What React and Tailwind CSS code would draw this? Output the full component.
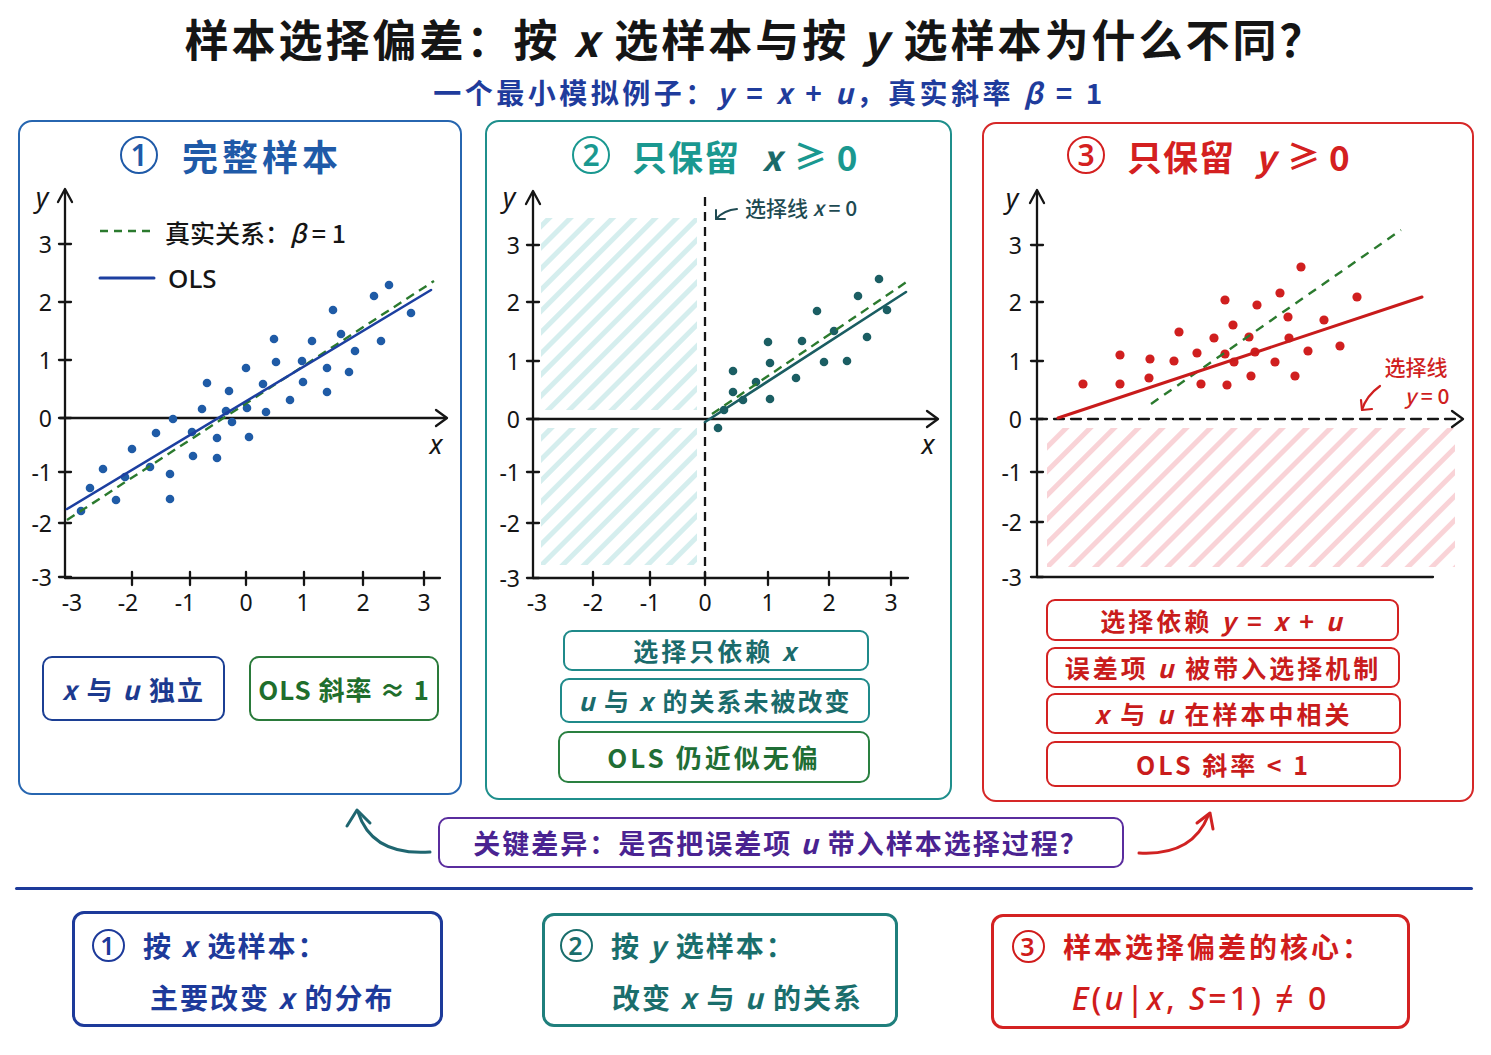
import React from "react";

const V = ({ children }) => <span className="italic">{children}</span>;

const Circ = ({ n, className }) => (
  <span
    className={`inline-flex items-center justify-center rounded-full border-current shrink-0 leading-none font-['Noto_Sans',sans-serif] ${className}`}
  >
    {n}
  </span>
);

function Axes({ ax, top, bottom, ticksY, labelX, zeroY, xStart, xEnd, dashed, bottomEnd, tickMarks, xLabels, yLab, xLab }) {
  return (
    <g stroke="#151515" strokeWidth="2.3" fill="none" strokeLinecap="round" strokeLinejoin="round">
      <line x1={ax} y1={bottom} x2={ax} y2={top + 2} />
      <polyline points={`${ax - 7},${top + 13} ${ax},${top} ${ax + 7},${top + 13}`} />
      {ticksY.map(([y]) => (
        <line key={y} x1={ax - 6} y1={y} x2={ax + 6} y2={y} />
      ))}
      <line x1={xStart} y1={zeroY} x2={xEnd - 1} y2={zeroY} strokeDasharray={dashed ? "10 7" : undefined} />
      <polyline points={`${xEnd - 11},${zeroY - 8} ${xEnd},${zeroY} ${xEnd - 11},${zeroY + 8}`} />
      <line x1={ax} y1={bottom} x2={bottomEnd} y2={bottom} />
      {tickMarks.map((x) => (
        <line key={x} x1={x} y1={bottom - 6} x2={x} y2={bottom + 7} />
      ))}
      <g stroke="none" fill="#151515" fontFamily="'Noto Sans', sans-serif" fontSize="23">
        {ticksY.map(([y, l]) => (
          <text key={l} x={labelX} y={y} textAnchor="end" dominantBaseline="central">
            {l}
          </text>
        ))}
        {xLabels.map(([x, l]) => (
          <text key={l} x={x} y={bottom + 24} textAnchor="middle" dominantBaseline="central">
            {l}
          </text>
        ))}
        <text x={yLab[0]} y={yLab[1]} fontSize="27" fontStyle="italic" textAnchor="middle" dominantBaseline="central">
          y
        </text>
        {xLab && (
          <text x={xLab[0]} y={xLab[1]} fontSize="27" fontStyle="italic" textAnchor="middle" dominantBaseline="central">
            x
          </text>
        )}
      </g>
    </g>
  );
}

const dots1 = [
  [81, 511], [90, 488], [103, 469], [116, 500], [132, 449], [125, 477], [150, 467], [156, 433],
  [173, 419], [170, 474], [170, 499], [192, 432], [193, 456], [202, 409], [207, 383], [217, 438],
  [217, 458], [226, 411], [229, 391], [232, 422], [246, 368], [247, 408], [249, 437], [263, 384],
  [266, 412], [274, 339], [276, 362], [290, 400], [302, 361], [303, 382], [312, 341], [327, 368],
  [327, 392], [333, 310], [341, 334], [349, 372], [355, 351], [374, 296], [381, 341], [389, 285],
  [411, 313],
];

const dots2 = [
  [718, 428], [724, 410], [733, 371], [733, 392], [743, 400], [756, 382], [768, 342], [770, 363],
  [770, 399], [796, 378], [802, 341], [817, 311], [824, 362], [834, 331], [847, 361], [858, 296],
  [867, 337], [879, 279], [887, 310],
];

const dots3 = [
  [1083, 384], [1120, 355], [1120, 384], [1149, 378], [1150, 359], [1174, 361], [1179, 332],
  [1197, 353], [1201, 384], [1214, 338], [1225, 300], [1225, 354], [1227, 385], [1233, 325],
  [1234, 362], [1249, 337], [1251, 376], [1255, 352], [1257, 305], [1275, 362], [1280, 293],
  [1288, 317], [1289, 338], [1295, 376], [1301, 267], [1308, 351], [1324, 320], [1340, 346],
  [1357, 297],
];

const yT1 = [[244, "3"], [302, "2"], [360, "1"], [418, "0"], [472, "-1"], [523, "-2"], [577, "-3"]];
const yT2 = [[245, "3"], [302, "2"], [361, "1"], [419, "0"], [472, "-1"], [523, "-2"], [578, "-3"]];
const yT3 = [[245, "3"], [302, "2"], [361, "1"], [419, "0"], [472, "-1"], [522, "-2"], [577, "-3"]];

function Chart1() {
  return (
    <svg width="440" height="446" viewBox="20 176 440 446" className="block shrink-0">
      <Axes
        ax={65}
        top={189}
        bottom={578}
        ticksY={yT1}
        labelX={52}
        zeroY={418}
        xStart={60}
        xEnd={447}
        bottomEnd={440}
        tickMarks={[132, 190, 246, 304, 363, 424]}
        xLabels={[[72, "-3"], [128, "-2"], [185, "-1"], [246, "0"], [303, "1"], [363, "2"], [424, "3"]]}
        yLab={[42, 196]}
        xLab={[436, 443]}
      />
      <line x1="100" y1="231" x2="153" y2="231" stroke="#2b7a2e" strokeWidth="2.6" strokeDasharray="8 6" />
      <line x1="100" y1="278" x2="154" y2="278" stroke="#1c3fa0" strokeWidth="3" strokeLinecap="round" />
      <text x="165" y="232" fontSize="25" fontWeight="500" fill="#151515" fontFamily="'Noto Sans CJK SC', sans-serif" dominantBaseline="central">
        真实关系：<tspan fontStyle="italic">β</tspan> = 1
      </text>
      <text x="168" y="278" fontSize="26" fontWeight="500" fill="#151515" fontFamily="'Noto Sans', sans-serif" dominantBaseline="central">
        OLS
      </text>
      {dots1.map(([x, y], i) => (
        <circle key={i} cx={x} cy={y} r="4.3" fill="#1f5ba6" />
      ))}
      <line x1="67" y1="520" x2="434" y2="281" stroke="#2b7a2e" strokeWidth="2.4" strokeDasharray="9 6" />
      <line x1="67" y1="509" x2="431" y2="290" stroke="#1c3fa0" strokeWidth="2.6" strokeLinecap="round" />
    </svg>
  );
}

function Chart2() {
  return (
    <svg width="463" height="446" viewBox="487 176 463 446" className="block shrink-0">
      <defs>
        <pattern id="hatchT" width="15" height="15" patternUnits="userSpaceOnUse" patternTransform="rotate(45)">
          <rect x="0" y="0" width="5" height="15" fill="#d5eeee" />
        </pattern>
      </defs>
      <rect x="541" y="218" width="156" height="192" fill="url(#hatchT)" />
      <rect x="541" y="428" width="156" height="137" fill="url(#hatchT)" />
      <Axes
        ax={533}
        top={191}
        bottom={578}
        ticksY={yT2}
        labelX={520}
        zeroY={419}
        xStart={528}
        xEnd={938}
        bottomEnd={908}
        tickMarks={[593, 650, 705, 768, 829, 891]}
        xLabels={[[537, "-3"], [593, "-2"], [650, "-1"], [705, "0"], [768, "1"], [829, "2"], [891, "3"]]}
        yLab={[509, 196]}
        xLab={[928, 443]}
      />
      <line x1="705" y1="197" x2="705" y2="578" stroke="#151515" strokeWidth="2.3" strokeDasharray="9 6" />
      <path d="M737 209 Q724 210 716 219" stroke="#1e4a52" strokeWidth="2" fill="none" strokeLinecap="round" />
      <polyline points="716,210 716,219 725,219" stroke="#1e4a52" strokeWidth="2" fill="none" strokeLinecap="round" strokeLinejoin="round" />
      <text x="745" y="207" fontSize="21" fill="#1e4a52" fontFamily="'Noto Sans CJK SC', sans-serif" fontWeight="500" dominantBaseline="central">
        选择线 <tspan fontStyle="italic">x</tspan> = 0
      </text>
      {dots2.map(([x, y], i) => (
        <circle key={i} cx={x} cy={y} r="4.3" fill="#1b5e63" />
      ))}
      <line x1="712" y1="414" x2="908" y2="281" stroke="#2b7a2e" strokeWidth="2.4" strokeDasharray="9 6" />
      <line x1="705" y1="422" x2="906" y2="292" stroke="#1a5d62" strokeWidth="2.6" strokeLinecap="round" />
    </svg>
  );
}

function Chart3() {
  return (
    <svg width="488" height="421" viewBox="984 178 488 421" className="block shrink-0">
      <defs>
        <pattern id="hatchR" width="17" height="17" patternUnits="userSpaceOnUse" patternTransform="rotate(45)">
          <rect x="0" y="0" width="5" height="17" fill="#f9d3d7" />
        </pattern>
      </defs>
      <rect x="1047" y="428" width="408" height="139" fill="url(#hatchR)" />
      <Axes
        ax={1037}
        top={190}
        bottom={577}
        ticksY={yT3}
        labelX={1022}
        zeroY={419}
        xStart={1037}
        xEnd={1463}
        dashed
        bottomEnd={1433}
        tickMarks={[]}
        xLabels={[]}
        yLab={[1012, 197]}
      />
      {dots3.map(([x, y], i) => (
        <circle key={i} cx={x} cy={y} r="4.6" fill="#d01f1f" />
      ))}
      <line x1="1151" y1="404" x2="1401" y2="230" stroke="#2b7a2e" strokeWidth="2.4" strokeDasharray="9 7" />
      <line x1="1058" y1="418" x2="1422" y2="297" stroke="#c81b1b" strokeWidth="3" strokeLinecap="round" />
      <text x="1416" y="366" fontSize="21" fill="#cf1f1f" fontFamily="'Noto Sans CJK SC', sans-serif" fontWeight="500" textAnchor="middle" dominantBaseline="central">
        选择线
      </text>
      <text x="1427" y="395" fontSize="21" fill="#cf1f1f" fontFamily="'Noto Sans CJK SC', sans-serif" fontWeight="500" textAnchor="middle" dominantBaseline="central">
        <tspan fontStyle="italic">y</tspan> = 0
      </text>
      <path d="M1380 386 Q1366 396 1362 410" stroke="#cf1f1f" strokeWidth="2.2" fill="none" strokeLinecap="round" />
      <polyline points="1361,400 1362,410 1372,409" stroke="#cf1f1f" strokeWidth="2.2" fill="none" strokeLinecap="round" strokeLinejoin="round" />
    </svg>
  );
}

export default function App() {
  return (
    <div className="w-[1491px] h-[1055px] bg-white overflow-hidden font-['Noto_Sans_CJK_SC',sans-serif] text-[#151515]">
      <div className="h-[76px] flex items-center justify-center pl-[20px]">
        <h1 className="text-[44px] font-bold tracking-[3px] leading-none">
          样本选择偏差：按 <V>x</V> 选样本与按 <V>y</V> 选样本为什么不同？
        </h1>
      </div>
      <div className="h-[32px] flex items-center justify-center pl-[48px]">
        <p className="text-[28px] font-semibold tracking-[3.5px] leading-none text-[#1f3c9c]">
          一个最小模拟例子：<V>y</V> = <V>x</V> + <V>u</V>，真实斜率 <V>β</V> = 1
        </p>
      </div>

      <div className="mt-[12px] flex items-start">
        {/* panel 1 */}
        <div className="ml-[18px] w-[444px] h-[675px] border-2 border-[#2766b0] rounded-[14px] flex flex-col">
          <div className="h-[54px] pt-[12px] pl-[100px] flex items-center text-[#1f5aa8]">
            <Circ n="1" className="w-[38px] h-[38px] border-[2.5px] text-[30px] font-semibold" />
            <span className="ml-[24px] text-[36px] tracking-[4px] font-semibold leading-none">完整样本</span>
          </div>
          <Chart1 />
          <div className="mt-[34px] flex pl-[22px]">
            <div className="w-[183px] h-[65px] border-2 border-[#1c3f94] rounded-[10px] flex items-center justify-center text-[26px] font-semibold tracking-[2px] text-[#1c3a8f] leading-none">
              <V>x</V>&nbsp;与&nbsp;<V>u</V>&nbsp;独立
            </div>
            <div className="ml-[24px] w-[190px] h-[65px] border-2 border-[#2a7a3a] rounded-[10px] flex items-center justify-center text-[26px] font-semibold tracking-[1px] text-[#1f6e2c] leading-none">
              OLS 斜率 ≈ 1
            </div>
          </div>
        </div>

        {/* panel 2 */}
        <div className="ml-[23px] w-[467px] h-[680px] border-2 border-[#1f8f8c] rounded-[14px] flex flex-col">
          <div className="h-[54px] pt-[12px] pl-[85px] flex items-center text-[#1a9890]">
            <Circ n="2" className="w-[38px] h-[38px] border-[2.5px] text-[30px] font-semibold" />
            <span className="ml-[22px] text-[35px] tracking-[1px] font-semibold leading-none">只保留</span>
            <span className="ml-[22px] text-[35px] font-semibold leading-none text-[#1a6a6a]">
              <V>x</V>
            </span>
            <span className="ml-[12px] text-[33px] font-semibold leading-none">≥</span>
            <span className="ml-[10px] text-[35px] font-semibold leading-none">0</span>
          </div>
          <Chart2 />
          <div className="mt-[8px] flex flex-col text-[25px] font-semibold leading-none">
            <div className="ml-[76px] w-[306px] h-[41px] border-2 border-[#1f8a8a] rounded-[9px] flex items-center justify-center tracking-[3px] text-[#1a6b6b]">
              选择只依赖&nbsp;<V>x</V>
            </div>
            <div className="mt-[7px] ml-[73px] w-[310px] h-[45px] border-2 border-[#1f8a8a] rounded-[9px] flex items-center justify-center tracking-[2px] text-[#1a6b6b]">
              <V>u</V>&nbsp;与&nbsp;<V>x</V>&nbsp;的关系未被改变
            </div>
            <div className="mt-[8px] ml-[71px] w-[312px] h-[52px] border-2 border-[#2a8040] rounded-[10px] flex items-center justify-center tracking-[3px] text-[#1f6e35] text-[26px]">
              OLS 仍近似无偏
            </div>
          </div>
        </div>

        {/* panel 3 */}
        <div className="mt-[2px] ml-[30px] w-[492px] h-[680px] border-2 border-[#d62828] rounded-[14px] flex flex-col">
          <div className="h-[54px] pt-[8px] pl-[83px] flex items-center text-[#d42020]">
            <Circ n="3" className="w-[38px] h-[38px] border-[2.5px] text-[30px] font-semibold" />
            <span className="ml-[22px] text-[35px] tracking-[1px] font-semibold leading-none">只保留</span>
            <span className="ml-[20px] text-[35px] font-semibold leading-none">
              <V>y</V>
            </span>
            <span className="ml-[12px] text-[33px] font-semibold leading-none">≥</span>
            <span className="ml-[9px] text-[35px] font-semibold leading-none">0</span>
          </div>
          <Chart3 />
          <div className="flex flex-col pl-[62px] text-[25px] font-semibold leading-none text-[#c91c1c] tracking-[3px]">
            <div className="w-[353px] h-[42px] border-2 border-[#d42222] rounded-[9px] flex items-center justify-center">
              选择依赖&nbsp;<V>y</V>&nbsp;=&nbsp;<V>x</V>&nbsp;+&nbsp;<V>u</V>
            </div>
            <div className="mt-[6px] w-[354px] h-[41px] border-2 border-[#d42222] rounded-[9px] flex items-center justify-center">
              误差项&nbsp;<V>u</V>&nbsp;被带入选择机制
            </div>
            <div className="mt-[5px] w-[355px] h-[41px] border-2 border-[#d42222] rounded-[9px] flex items-center justify-center">
              <V>x</V>&nbsp;与&nbsp;<V>u</V>&nbsp;在样本中相关
            </div>
            <div className="mt-[7px] w-[355px] h-[46px] border-2 border-[#d42222] rounded-[9px] flex items-center justify-center">
              OLS 斜率 &lt; 1
            </div>
          </div>
        </div>
      </div>

      {/* key difference row */}
      <div className="h-[78px] flex items-start pl-[340px]">
        <svg width="98" height="78" viewBox="340 802 98 78" className="block shrink-0">
          <path d="M430 852 Q372 856 358 812" stroke="#1f6670" strokeWidth="3" fill="none" strokeLinecap="round" />
          <polyline points="347,826 357,810 370,823" stroke="#1f6670" strokeWidth="3" fill="none" strokeLinecap="round" strokeLinejoin="round" />
        </svg>
        <div className="mt-[15px] w-[686px] h-[51px] border-2 border-[#5a2d9e] rounded-[10px] flex items-center justify-center text-[27px] font-semibold tracking-[2px] text-[#4a2391] leading-none">
          关键差异：是否把误差项&nbsp;<V>u</V>&nbsp;带入样本选择过程？
        </div>
        <svg width="100" height="78" viewBox="1124 802 100 78" className="block shrink-0">
          <path d="M1139 853 Q1192 856 1208 816" stroke="#d02222" strokeWidth="3" fill="none" strokeLinecap="round" />
          <polyline points="1197,823 1210,813 1213,829" stroke="#d02222" strokeWidth="3" fill="none" strokeLinecap="round" strokeLinejoin="round" />
        </svg>
      </div>

      <div className="mt-[7px] ml-[15px] w-[1458px] h-[3px] bg-[#1d3a9a] rounded-full" />

      {/* bottom summary */}
      <div className="flex items-start text-[28px] font-semibold tracking-[2px] leading-none">
        <div className="mt-[21px] ml-[72px] w-[371px] h-[116px] border-[3px] border-[#1d3a9a] rounded-[12px] flex flex-col text-[#1d3a9a]">
          <div className="mt-[14px] ml-[17px] h-[34px] flex items-center">
            <Circ n="1" className="w-[33px] h-[33px] border-[2.5px] text-[25px] font-semibold" />
            <span className="ml-[18px]">按&nbsp;<V>x</V>&nbsp;选样本：</span>
          </div>
          <div className="mt-[18px] ml-[75px] h-[34px] flex items-center">
            主要改变&nbsp;<V>x</V>&nbsp;的分布
          </div>
        </div>
        <div className="mt-[23px] ml-[99px] w-[356px] h-[114px] border-[3px] border-[#1f7f7c] rounded-[12px] flex flex-col text-[#1a6e6c]">
          <div className="mt-[12px] ml-[15px] h-[34px] flex items-center">
            <Circ n="2" className="w-[33px] h-[33px] border-[2.5px] text-[25px] font-semibold" />
            <span className="ml-[18px]">按&nbsp;<V>y</V>&nbsp;选样本：</span>
          </div>
          <div className="mt-[18px] ml-[67px] h-[34px] flex items-center">
            改变&nbsp;<V>x</V>&nbsp;与&nbsp;<V>u</V>&nbsp;的关系
          </div>
        </div>
        <div className="mt-[24px] ml-[93px] w-[419px] h-[115px] border-[3px] border-[#d42222] rounded-[12px] flex flex-col text-[#d01c1c]">
          <div className="mt-[12px] ml-[18px] h-[34px] flex items-center">
            <Circ n="3" className="w-[33px] h-[33px] border-[2.5px] text-[25px] font-semibold" />
            <span className="ml-[18px] tracking-[3px]">样本选择偏差的核心：</span>
          </div>
          <div className="mt-[16px] h-[38px] flex items-center justify-center text-[32px] font-['Noto_Sans',sans-serif] font-medium tracking-[3px]">
            <V>E</V>(<V>u</V>|<V>x</V>,&nbsp;<V>S</V>=1)&nbsp;≠&nbsp;0
          </div>
        </div>
      </div>
    </div>
  );
}
